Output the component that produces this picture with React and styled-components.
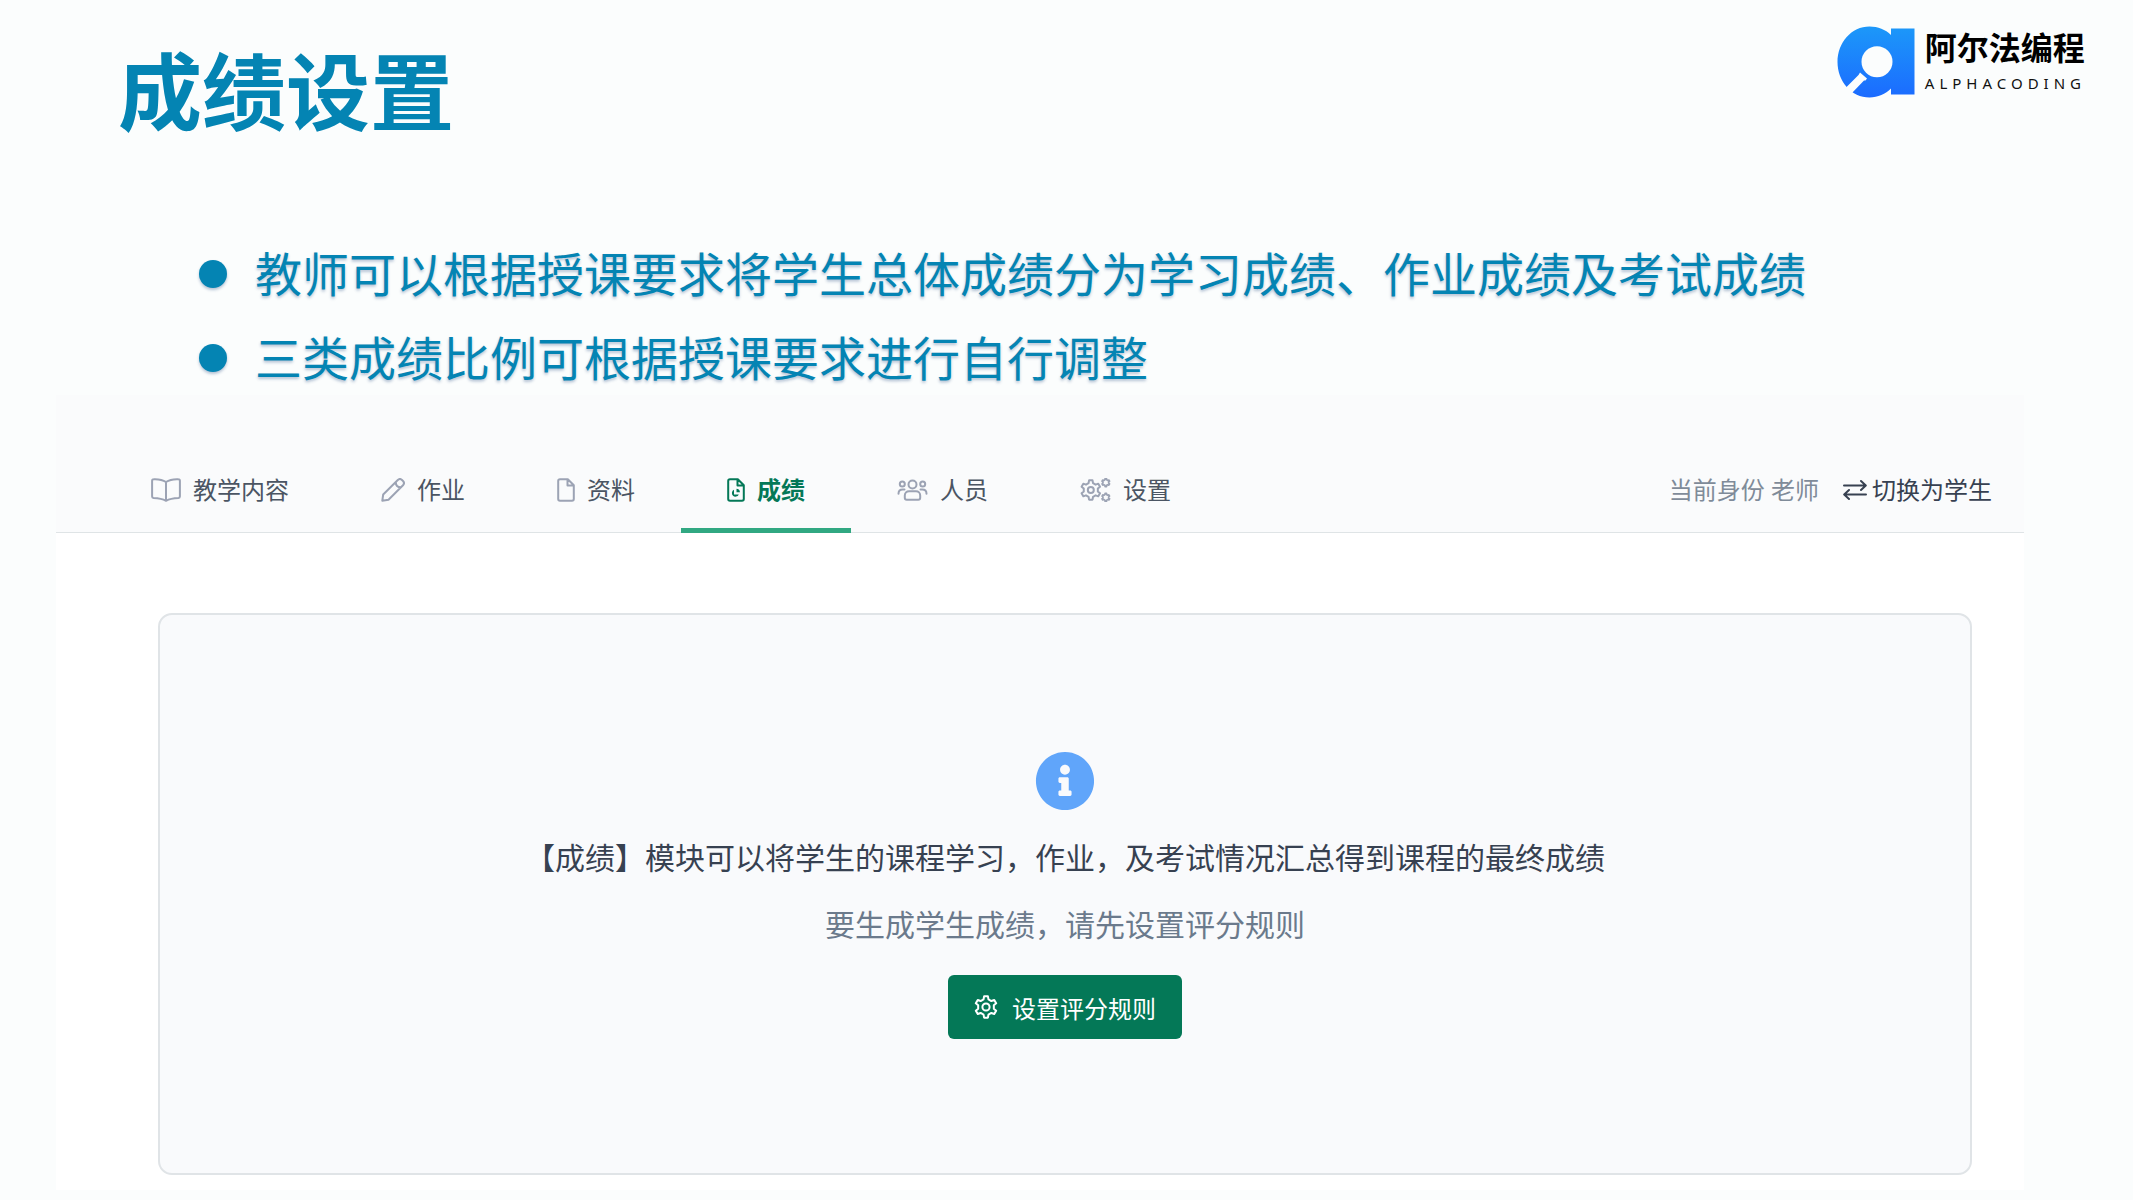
import React from "react";
import styled, { createGlobalStyle } from "styled-components";
import { FaInfoCircle } from "react-icons/fa";

const brand = "#0484b3";
const green = "#047857";

const GlobalStyle = createGlobalStyle`
  * {
    box-sizing: border-box;
  }

  body {
    margin: 0;
    background: #fbfdfd;
    font-family: "Noto Sans", "Noto Sans CJK SC", sans-serif;
  }
`;

// outline of a cog, teeth start at the top
const cogPath = (cx, cy, outer, inner, teeth = 6) => {
  const step = (Math.PI * 2) / teeth;
  const points = [];
  for (let i = 0; i < teeth; i++) {
    const mid = i * step - Math.PI / 2;
    [
      [inner, -0.3],
      [outer, -0.17],
      [outer, 0.17],
      [inner, 0.3],
    ].forEach(([r, t]) => {
      const a = mid + t * step;
      points.push(
        `${(cx + r * Math.cos(a)).toFixed(2)} ${(cy + r * Math.sin(a)).toFixed(2)}`
      );
    });
  }
  return `M${points.join("L")}Z`;
};

const BookIcon = () => (
  <Icon width="30" height="24" viewBox="0 0 30 24">
    <path d="M15 4C12 2 7 1 2.6 1.2 1.7 1.2 1.1 1.8 1.1 2.7V18.6c0 .9.6 1.4 1.5 1.5C7 20.3 11.5 21 15 22.8 18.5 21 23 20.3 27.4 20.1c.9-.1 1.5-.6 1.5-1.5V2.7c0-.9-.6-1.5-1.5-1.5C23 1 18 2 15 4ZM15 4V22.8" />
  </Icon>
);

const PencilIcon = () => (
  <Icon width="24" height="24" viewBox="0 0 24 24">
    <path d="M1.3 22.7 2.2 16.5 16.8 2c1.3-1.2 3-1.2 4.2 0l1 1c1.2 1.2 1.2 2.9 0 4.2L7.5 21.8ZM14.8 4.2c0 3 2 5 5 5" />
  </Icon>
);

const FileIcon = () => (
  <Icon width="18" height="24" viewBox="0 0 18 24">
    <path d="M3 1.2H10.8L16.8 7.2V21c0 1-.8 1.8-1.8 1.8H3c-1 0-1.8-.8-1.8-1.8V3c0-1 .8-1.8 1.8-1.8ZM10.5 1.5V7.5H16.5" />
  </Icon>
);

const GradeIcon = () => (
  <Icon width="18" height="24" viewBox="0 0 18 24">
    <path d="M3 1.2H10.8L16.8 7.2V21c0 1-.8 1.8-1.8 1.8H3c-1 0-1.8-.8-1.8-1.8V3c0-1 .8-1.8 1.8-1.8ZM10.5 1.5V7.5H16.5" />
    <path d="M7 11.8a3.6 3.6 0 1 0 4.8 4.7H7Z" fill="currentColor" stroke="none" />
    <path d="M9.5 10.8v3.4h3.4a3.5 3.5 0 0 0-3.4-3.4Z" fill="currentColor" stroke="none" />
  </Icon>
);

const PeopleIcon = () => (
  <Icon width="31" height="24" viewBox="0 0 30 24">
    <circle cx="15" cy="6.5" r="4" />
    <circle cx="4.8" cy="6" r="2.5" />
    <circle cx="25.2" cy="6" r="2.5" />
    <path d="M11.5 13.2h7c2.4 0 4.2 1.8 4.2 4.2v2.4c0 1.2-.7 1.9-1.9 1.9H9.2c-1.2 0-1.9-.7-1.9-1.9v-2.4c0-2.4 1.8-4.2 4.2-4.2ZM1 15.8c0-2.6 1.5-4.3 4.2-4.3H7M29 15.8c0-2.6-1.5-4.3-4.2-4.3H23" />
  </Icon>
);

const CogsIcon = () => (
  <Icon width="31" height="24" viewBox="0 0 31 24">
    <path d={cogPath(10.8, 12, 9.8, 7.2)} />
    <circle cx="10.8" cy="12" r="3" />
    <g strokeWidth="1.7">
      <path d={cogPath(25.8, 4.6, 4, 2.9)} />
      <path d={cogPath(25.8, 19.4, 4, 2.9)} />
    </g>
    {/* hubs of the small cogs */}
    <circle cx="25.8" cy="4.6" r="1.1" fill="#fafbfc" stroke="none" />
    <circle cx="25.8" cy="19.4" r="1.1" fill="#fafbfc" stroke="none" />
  </Icon>
);

const CogIcon = () => (
  <Icon width="24" height="24" viewBox="0 0 24 24">
    <path d={cogPath(12, 12, 10.8, 8)} />
    <circle cx="12" cy="12" r="3.6" />
  </Icon>
);

const SwapIcon = () => (
  <Icon width="24" height="24" viewBox="0 0 24 24">
    <path d="M1 7.5H22.5M18 3l4.8 4.5L18 12M23 16.5H1.5M6 12 1.2 16.5 6 21" />
  </Icon>
);

const LogoMark = () => (
  <svg width="78" height="72" viewBox="0 0 78 72" aria-hidden="true">
    <defs>
      <linearGradient id="mark" x1="0" y1="0" x2="0" y2="1">
        <stop offset="0" stopColor="#1c98f9" />
        <stop offset="1" stopColor="#1b6bff" />
      </linearGradient>
    </defs>
    <path
      d="M54 2.5H77.5V68.5H54V62.5C48.5 68 41 71.5 32.5 71.5 14.5 71.5 0.5 55.5 0.5 36S14.5 0.5 32.5 0.5C41 0.5 48.5 3.5 54 9Z"
      fill="url(#mark)"
    />
    <circle cx="40" cy="35.8" r="15.5" fill="#fbfdfd" />
    <path d="M23 46.5 30 52.5 28.5 54.5H27L14.5 67.5 8.5 62 21.5 49Z" fill="#fbfdfd" />
  </svg>
);

const tabs = [
  { label: "教学内容", icon: BookIcon },
  { label: "作业", icon: PencilIcon },
  { label: "资料", icon: FileIcon },
  { label: "成绩", icon: GradeIcon, active: true },
  { label: "人员", icon: PeopleIcon },
  { label: "设置", icon: CogsIcon },
];

const App = () => (
  <Page>
    <GlobalStyle />
    <Header>
      <Title>成绩设置</Title>
      <Logo>
        <LogoMark />
        <LogoText>
          <LogoName>阿尔法编程</LogoName>
          <LogoSub>ALPHACODING</LogoSub>
        </LogoText>
      </Logo>
    </Header>
    <Points>
      <Point>教师可以根据授课要求将学生总体成绩分为学习成绩、作业成绩及考试成绩</Point>
      <Point>三类成绩比例可根据授课要求进行自行调整</Point>
    </Points>
    <Panel>
      <Toolbar>
        <Tabs>
          {tabs.map(({ label, icon: TabIcon, active }) => (
            <Tab
              key={label}
              href="#"
              $active={active}
              aria-current={active ? "page" : undefined}
            >
              <TabIcon />
              <span>{label}</span>
            </Tab>
          ))}
        </Tabs>
        <Identity>
          <span>当前身份 老师</span>
          <SwitchButton type="button">
            <SwapIcon />
            切换为学生
          </SwitchButton>
        </Identity>
      </Toolbar>
      <Card>
        <InfoIcon aria-hidden="true" />
        <Message>【成绩】模块可以将学生的课程学习，作业，及考试情况汇总得到课程的最终成绩</Message>
        <Hint>要生成学生成绩，请先设置评分规则</Hint>
        <RuleButton type="button">
          <CogIcon />
          设置评分规则
        </RuleButton>
      </Card>
    </Panel>
  </Page>
);

export default App;

const Page = styled.div`
  display: flex;
  flex-direction: column;
  min-height: 100vh;
  padding-bottom: 10px;
`;

const Header = styled.header`
  display: flex;
  justify-content: space-between;
  align-items: flex-start;
  padding: 26px 47px 0 118px;
`;

const Title = styled.h1`
  margin: 16px 0 0;
  color: ${brand};
  font-size: 84px;
  font-weight: 700;
  line-height: 100px;
`;

const Logo = styled.div`
  display: flex;
  gap: 10px;
`;

const LogoText = styled.div`
  display: flex;
  flex-direction: column;
`;

const LogoName = styled.span`
  color: #000;
  font-size: 32px;
  font-weight: 700;
  line-height: 44px;
`;

const LogoSub = styled.span`
  color: #111;
  font-size: 15px;
  letter-spacing: 5px;
  line-height: 26px;
`;

const Points = styled.ul`
  display: flex;
  flex-direction: column;
  gap: 16px;
  margin: 98px 0 3px;
  padding: 0 48px 0 199px;
  list-style: none;
`;

const Point = styled.li`
  display: flex;
  align-items: center;
  gap: 28px;
  color: ${brand};
  font-size: 47px;
  line-height: 68px;
  text-shadow: 0 2px 3px rgba(20, 60, 120, 0.3);

  &::before {
    content: "";
    flex: none;
    width: 28px;
    height: 28px;
    border-radius: 50%;
    background: ${brand};
    box-shadow: 0 2px 3px rgba(20, 60, 120, 0.3);
  }
`;

const Panel = styled.main`
  flex: 1;
  display: flex;
  flex-direction: column;
  margin: 0 109px 0 56px;
  padding-bottom: 15px;
  background: #fff;
`;

const Toolbar = styled.div`
  display: flex;
  justify-content: space-between;
  padding: 56px 32px 0 49px;
  border-bottom: 1px solid #dfe4e6;
  background: #fafbfc;
`;

const Tabs = styled.nav`
  display: flex;
  margin-bottom: -1px;
`;

const Tab = styled.a`
  display: flex;
  align-items: center;
  gap: 12px;
  height: 82px;
  padding: 0 46px;
  border-bottom: 5px solid ${(p) => (p.$active ? "#31a882" : "transparent")};
  color: ${(p) => (p.$active ? green : "#4b5563")};
  font-size: 24px;
  font-weight: ${(p) => (p.$active ? 700 : 400)};
  line-height: 32px;
  text-decoration: none;

  svg {
    color: ${(p) => (p.$active ? green : "#9ca3b4")};
  }
`;

const Icon = styled.svg.attrs({ "aria-hidden": true })`
  flex: none;
  fill: none;
  stroke: currentColor;
  stroke-width: 2;
  stroke-linecap: round;
  stroke-linejoin: round;
`;

const Identity = styled.div`
  display: flex;
  align-items: center;
  gap: 24px;
  height: 77px;
  color: #7f8b99;
  font-size: 24px;
  line-height: 32px;
`;

const SwitchButton = styled.button`
  display: flex;
  align-items: center;
  gap: 5px;
  padding: 0;
  border: 0;
  background: none;
  color: #374151;
  font: inherit;
  cursor: pointer;
`;

const Card = styled.section`
  flex: 1;
  display: flex;
  flex-direction: column;
  align-items: center;
  margin: 80px 52px 0 102px;
  padding: 136px 24px 120px;
  border: 2px solid #e0e4e7;
  border-radius: 14px;
  background: #f9fafc;
`;

const InfoIcon = styled(FaInfoCircle)`
  width: 60px;
  height: 60px;
  color: #60a5fa;
`;

const Message = styled.p`
  margin: 25px 0 23px;
  color: #374151;
  font-size: 30px;
  line-height: 44px;
`;

const Hint = styled.p`
  margin: 0 0 28px;
  color: #6b7a8c;
  font-size: 30px;
  line-height: 44px;
`;

const RuleButton = styled.button`
  display: flex;
  align-items: center;
  gap: 14px;
  height: 64px;
  padding: 0 26px;
  border: 0;
  border-radius: 6px;
  background: ${green};
  color: #fff;
  font-family: inherit;
  font-size: 24px;
  cursor: pointer;
`;
